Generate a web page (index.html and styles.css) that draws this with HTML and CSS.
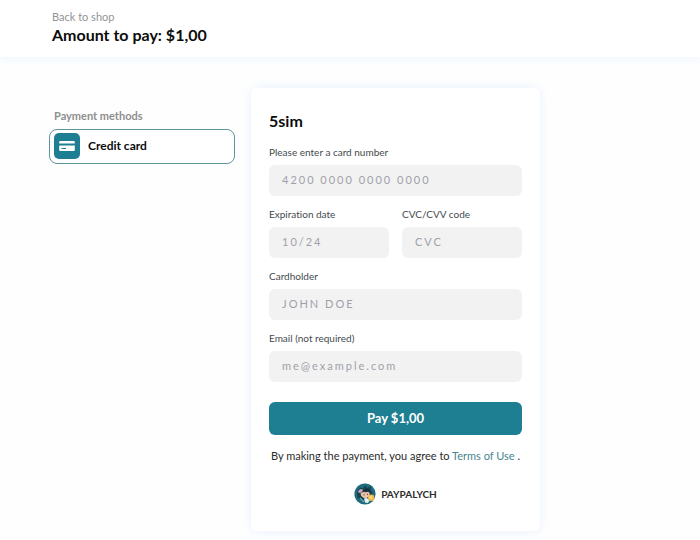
FILE: index.html
```html
<!DOCTYPE html>
<html lang="en">
<head>
<meta charset="utf-8">
<meta name="viewport" content="width=device-width, initial-scale=1">
<title>Payment</title>
<link rel="stylesheet" href="styles.css">
</head>
<body>
<header class="header">
  <a class="back" href="#">Back to shop</a>
  <h1 class="amount">Amount to pay: $1,00</h1>
</header>
<main class="layout">
  <section class="methods">
    <h2 class="methods-title">Payment methods</h2>
    <button class="method" type="button">
      <svg class="method-icon" viewBox="0 0 26 26" aria-hidden="true">
        <rect width="26" height="26" rx="5" fill="#1f7f92"/>
        <path d="M6.200 8h13.600a1 1 0 0 1 1 1V10.600H5.200V9A1 1 0 0 1 6.200 8z" fill="#fff"/>
        <path d="M5.200 12.400h15.600v4.600a1 1 0 0 1-1 1h-13.600a1 1 0 0 1-1-1z" fill="#fff"/>
        <path d="M7.500 15.500h4.500" stroke="#1f7f92" stroke-width="1"/>
      </svg>
      Credit card
    </button>
  </section>
  <form class="card">
    <h2 class="shop">5sim</h2>
    <div class="fields">
      <div class="field wide">
        <label for="number">Please enter a card number</label>
        <input id="number" type="text" placeholder="4200 0000 0000 0000">
      </div>
      <div class="field">
        <label for="expiry">Expiration date</label>
        <input id="expiry" type="text" placeholder="10/24">
      </div>
      <div class="field">
        <label for="cvc">CVC/CVV code</label>
        <input id="cvc" type="text" placeholder="CVC">
      </div>
      <div class="field wide">
        <label for="holder">Cardholder</label>
        <input id="holder" type="text" placeholder="JOHN DOE">
      </div>
      <div class="field wide">
        <label for="email">Email (not required)</label>
        <input id="email" type="email" placeholder="me@example.com">
      </div>
    </div>
    <button class="pay" type="submit">Pay $1,00</button>
    <p class="terms">By making the payment, you agree to <a href="#">Terms of Use</a> .</p>
    <div class="brand">
      <svg class="brand-logo" viewBox="0 0 22 22" aria-hidden="true">
        <circle cx="11" cy="11" r="10.600" fill="#1d6b7c"/>
        <path d="M3.500 14.500Q2 8 6 4.500L9 5.500 11 2.500 13 5 17 3.500 16.500 7Q19.500 10 17.500 13L11 18z" fill="#17424f"/>
        <path d="M4 8.500 6 6l3 .5-1 3-3 .5z" fill="#c9a3bd"/>
        <path d="M6.500 10.500Q9 9 11 8.500l4 .5q1.500 3-.5 5-3 2-5.500.500-2.500-1.500-2.500-4z" fill="#efc3a3"/>
        <path d="M9 8l3 1.500 2-1.500 1.500 2 1-3-4-2z" fill="#17323f"/>
        <path d="M9.500 11.800h1M13 11.300h1" stroke="#24313b" stroke-width="1"/>
        <path d="M10 15.500l3-.5 2.500 2.500-1.500 2.500-3-.5z" fill="#e9f0f2"/>
        <path d="M6 15l4 4" stroke="#65a4b0" stroke-width="1.500"/>
        <circle cx="17.200" cy="14.800" r="3.200" fill="#edbd4f"/>
        <circle cx="16.800" cy="14.400" r="1.500" fill="#f7da87"/>
      </svg>
      <span>PAYPALYCH</span>
    </div>
  </form>
</main>
</body>
</html>
```

FILE: styles.css
```css
* {
  box-sizing: border-box;
}

body {
  margin: 0;
  background: #fefefe;
  color: #0c0c0c;
  font-family: Lato, "Open Sans", sans-serif;
  font-variant-ligatures: none;
}

h1, h2, p {
  margin: 0;
}

.header {
  display: flex;
  flex-direction: column;
  align-items: flex-start;
  padding: 10px 52px 12px;
  background: #fff;
  box-shadow: 0 2px 10px #edf5fd;
}

.back {
  color: #929292;
  font-size: 11px;
  line-height: 14px;
  text-decoration: none;
}

.amount {
  font-size: 16px;
  font-weight: 700;
  line-height: 21px;
}

.layout {
  display: grid;
  grid-template-columns: minmax(0, 186px) minmax(0, 289px);
  align-items: start;
  gap: 16px;
  padding: 31px 49px 8px;
}

.methods {
  padding-top: 20px;
}

.methods-title {
  padding-left: 5px;
  color: #8e8e8e;
  font-size: 11px;
  font-weight: 700;
  line-height: 16px;
}

.method {
  display: flex;
  align-items: center;
  gap: 8px;
  width: 100%;
  margin-top: 5px;
  padding: 3px 4px 4px;
  border: 1px solid #5c979e;
  border-radius: 8px;
  background: #fff;
  color: #0c0c0c;
  font: 700 12px/16px Lato, "Open Sans", sans-serif;
}

.method-icon {
  width: 26px;
  height: 26px;
}

.card {
  padding: 22px 18px 26px;
  border-radius: 6px;
  background: #fff;
  box-shadow: 0 0 12px #e8f2fd;
}

.shop {
  font-size: 16px;
  font-weight: 700;
  line-height: 21px;
}

.fields {
  display: grid;
  grid-template-columns: 1fr 1fr;
  gap: 11px 13px;
  margin-top: 14px;
}

.field {
  display: flex;
  flex-direction: column;
  gap: 6px;
  min-width: 0;
}

.wide {
  grid-column: 1 / -1;
}

.field label {
  color: #444a4e;
  font-size: 10px;
  line-height: 14px;
}

.field input {
  width: 100%;
  height: 31px;
  padding: 0 13px 2px;
  border: 0;
  border-radius: 6px;
  background: #f2f2f2;
  color: #222;
  font: 11px/16px Lato, "Open Sans", sans-serif;
  letter-spacing: 2px;
}

.field input::placeholder {
  color: #a0a1a9;
  opacity: 1;
}

.pay {
  width: 100%;
  margin-top: 20px;
  padding: 8px;
  border: 0;
  border-radius: 6px;
  background: #1f7f92;
  color: #fff;
  font: 700 13px/17px Lato, "Open Sans", sans-serif;
}

.terms {
  margin-top: 13px;
  color: #2b2b2b;
  font-size: 11px;
  line-height: 16px;
  text-align: center;
}

.terms a {
  color: #46858f;
  text-decoration: none;
}

.brand {
  display: flex;
  align-items: center;
  justify-content: center;
  gap: 5px;
  margin-top: 19px;
  color: #2b2b2b;
  font-size: 10px;
  font-weight: 700;
  line-height: 16px;
}

.brand-logo {
  width: 22px;
  height: 22px;
}
```
